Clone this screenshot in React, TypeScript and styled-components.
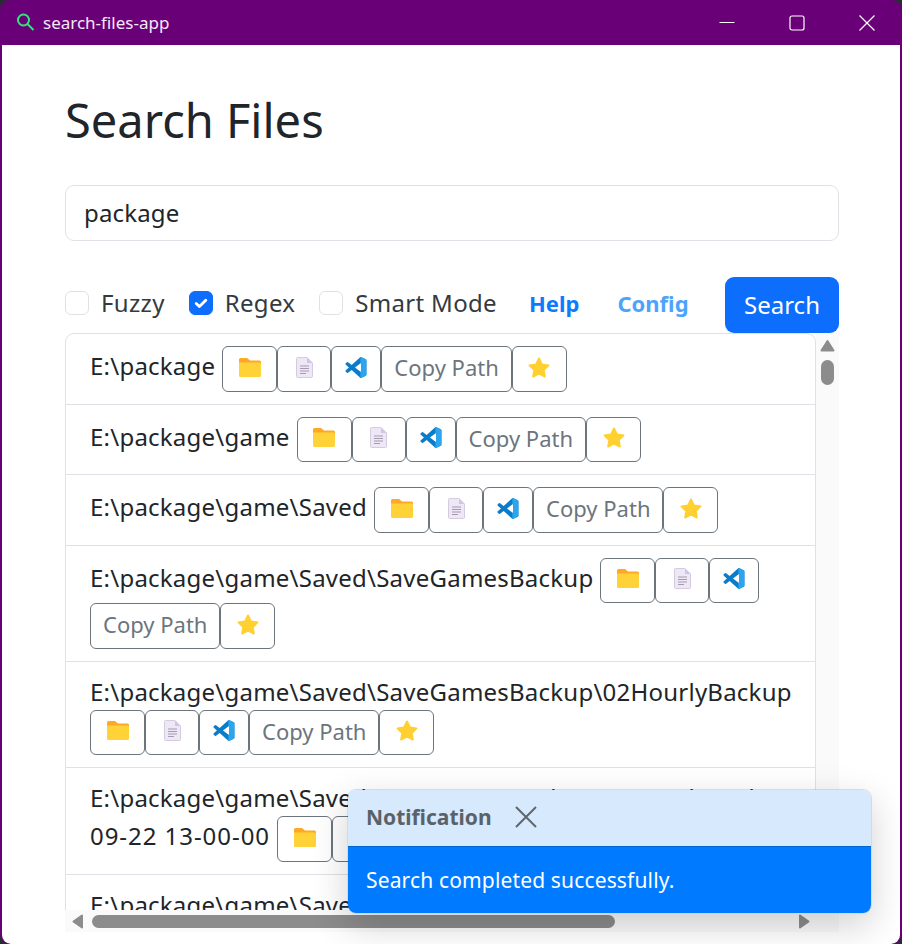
import styled, { createGlobalStyle } from "styled-components";

const GlobalStyle = createGlobalStyle`
    * { box-sizing: border-box; }
    html, body {
        margin: 0;
        height: 100%;
        background: #2b2b33;
    }
    body {
        font-family: "Noto Sans", "Liberation Sans", sans-serif;
        font-size: 24px;
        line-height: 36px;
        color: #212529;
    }
`;

const Window = styled.div`
    width: 902px;
    height: 944px;
    display: flex;
    flex-direction: column;
    background: #6a0078;
    border-radius: 10px;
    padding: 0 2px;
    overflow: hidden;
    position: relative;
`;

const TitleBar = styled.header`
    height: 45px;
    flex-shrink: 0;
    display: flex;
    align-items: center;
    margin-right: -2px;
    padding-left: 14px;
    color: #f5e9f7;
    font-size: 17px;
`;

const TitleText = styled.span`
    margin-left: 8px;
    flex-grow: 1;
`;

const CaptionButton = styled.button`
    width: 70px;
    height: 45px;
    border: 0;
    padding: 0;
    background: transparent;
    display: flex;
    align-items: center;
    justify-content: center;
`;

const Content = styled.main`
    flex-grow: 1;
    min-height: 0;
    background: #ffffff;
    border-radius: 0 0 9px 9px;
    padding: 47px 61px 12px 63px;
    display: flex;
    flex-direction: column;
`;

const Heading = styled.h1`
    margin: 0 0 37px;
    font-size: 47px;
    font-weight: 400;
    line-height: 56px;
`;

const SearchInput = styled.input`
    height: 56px;
    flex-shrink: 0;
    width: 100%;
    padding: 8px 18px 10px;
    font: inherit;
    letter-spacing: 0.15px;
    color: #212529;
    border: 1px solid #dee2e6;
    border-radius: 9px;
    outline: none;
`;

const Toolbar = styled.div`
    margin-top: 36px;
    height: 56px;
    flex-shrink: 0;
    display: flex;
    align-items: center;
`;

const Option = styled.label`
    display: flex;
    align-items: center;
    gap: 12px;
    margin-right: 24px;
    margin-bottom: 4px;
    color: #343a40;
    letter-spacing: 0.32px;
`;

const CheckBox = styled.span<{ $checked?: boolean }>`
    width: 24px;
    height: 24px;
    border-radius: 6px;
    border: 1px solid ${(p) => (p.$checked ? "#0d6efd" : "#dee2e6")};
    background: ${(p) => (p.$checked ? "#0d6efd" : "#ffffff")};
    display: flex;
    align-items: center;
    justify-content: center;
`;

const ToolLink = styled.a<{ $light?: boolean }>`
    font-size: 22px;
    font-weight: 700;
    margin-bottom: 4px;
    color: ${(p) => (p.$light ? "#4da3fb" : "#0d7bfd")};
    margin-left: ${(p) => (p.$light ? "38px" : "8px")};
`;

const SearchButton = styled.button`
    margin-left: auto;
    width: 114px;
    height: 56px;
    border: 0;
    border-radius: 9px;
    background: #0d6efd;
    color: #ffffff;
    font: inherit;
`;

const ResultsFrame = styled.section`
    flex-grow: 1;
    min-height: 0;
    display: grid;
    grid-template-columns: 751px 23px;
    grid-template-rows: minmax(0, 1fr) 22px;
    background: #fafafa;
`;

const ResultsViewport = styled.div`
    overflow: hidden;
    background: #ffffff;
    min-width: 0;
`;

const ResultList = styled.ul`
    list-style: none;
    margin: 0;
    padding: 0;
    border: 1px solid #dee2e6;
    border-radius: 9px;
`;

const ResultRow = styled.li`
    padding: 12px 24px;
    border-top: 1px solid #dee2e6;

    &:first-child {
        border-top: 0;
    }
`;

const PathText = styled.span`
    margin-right: 7px;
    letter-spacing: 0.23px;
`;

const PathStamp = styled.span`
    letter-spacing: 0.95px;
`;

const ActionButton = styled.button<{ $width?: number }>`
    display: inline-flex;
    align-items: center;
    justify-content: center;
    vertical-align: middle;
    height: 45.5px;
    width: ${(p) => (p.$width ? `${p.$width}px` : "auto")};
    padding: 0 12px 3px;
    background: #ffffff;
    border: 1px solid #6c757d;
    border-radius: 6px;
    color: #6c757d;
    font-family: inherit;
    font-size: 22px;
`;

const VerticalBar = styled.div`
    display: flex;
    flex-direction: column;
    align-items: center;
    gap: 6px;
    padding-top: 6px;
`;

const VerticalThumb = styled.div`
    width: 13px;
    height: 25px;
    border-radius: 7px;
    background: #8c8c8c;
`;

const HorizontalBar = styled.div`
    display: flex;
    align-items: center;
    gap: 6px;
    padding: 0 5px 0 6px;
`;

const HorizontalThumb = styled.div`
    width: 523px;
    height: 13px;
    border-radius: 7px;
    background: #8c8c8c;
    margin-right: auto;
`;

const Toast = styled.aside`
    position: absolute;
    left: 347px;
    top: 789px;
    width: 525px;
    border-radius: 9px;
    overflow: hidden;
    border: 1px solid rgba(0, 0, 0, 0.15);
    box-shadow: 0 12px 36px rgba(0, 0, 0, 0.18);
`;

const ToastHeader = styled.div`
    height: 57px;
    display: flex;
    align-items: center;
    gap: 22px;
    padding: 0 18px 3px;
    background: #d7e9fd;
    color: #5a6268;
    font-size: 21px;
    font-weight: 700;
    border-bottom: 1px solid #0066cc;
`;

const ToastBody = styled.div`
    height: 66px;
    display: flex;
    align-items: center;
    padding: 0 18px;
    background: #007bff;
    color: #ffffff;
    font-size: 21px;
    letter-spacing: 0.15px;
`;

const FolderIcon = () => (
    <svg width="22" height="19" viewBox="0 0 22 19">
        <path d="M1.5 0h6.5l3 2.5h9.5a1.5 1.5 0 0 1 1.5 1.5v2H0V1.5A1.5 1.5 0 0 1 1.5 0z" fill="#ffa726" />
        <path d="M0 4.5h20.5a1.5 1.5 0 0 1 1.5 1.5v11.5a1.5 1.5 0 0 1-1.5 1.5h-19A1.5 1.5 0 0 1 0 17.5z" fill="#ffd338" />
    </svg>
);

const DocIcon = () => (
    <svg width="17" height="21" viewBox="0 0 17 21">
        <path d="M1.5.5h9.5l5.5 5.5v13.5a1 1 0 0 1-1 1h-14a1 1 0 0 1-1-1v-18a1 1 0 0 1 1-1z" fill="#ede7f6" stroke="#d5cbe0" />
        <path d="M11 .5v5.5h5.5z" fill="#d1c4e9" />
        <path d="M4 9h9M4 11.5h9M4 14h9M4 16.5h6" stroke="#a79ab0" strokeWidth="1.1" />
    </svg>
);

const CodeIcon = () => {
    const logo =
        "M23.15 2.587L18.21.21a1.494 1.494 0 0 0-1.705.29l-9.46 8.63-4.12-3.128a.999.999 0 0 0-1.276.057L.327 7.261A1 1 0 0 0 .326 8.74L3.899 12 .326 15.26a1 1 0 0 0 .001 1.479L1.65 17.94a.999.999 0 0 0 1.276.057l4.12-3.128 9.46 8.63a1.492 1.492 0 0 0 1.704.29l4.942-2.377A1.5 1.5 0 0 0 24 20.06V3.939a1.5 1.5 0 0 0-.85-1.352zm-5.146 14.861L10.826 12l7.178-5.448v10.896z";
    return (
        <svg width="22" height="21" viewBox="0 0 24 24">
            <clipPath id="code-panel">
                <rect x="17" y="0" width="7" height="24" />
            </clipPath>
            <path d={logo} fill="#0a7cc9" />
            <path d={logo} fill="#2aa5ee" clipPath="url(#code-panel)" />
        </svg>
    );
};

const StarIcon = () => (
    <svg width="22" height="21" viewBox="0 0 22 21">
        <path
            d="M11 1.5l2.9 5.9 6.6 1-4.8 4.6 1.1 6.5L11 16.4l-5.8 3.1 1.1-6.5L1.5 8.4l6.6-1z"
            fill="#ffd02f"
            stroke="#ffd02f"
            strokeWidth="2"
            strokeLinejoin="round"
        />
    </svg>
);

const ScrollArrow = ({ d }: { d: string }) => (
    <svg width="15" height="15" viewBox="0 0 15 15" fill="#8c8c8c" stroke="#8c8c8c" strokeLinejoin="round" strokeWidth="2">
        <path d={d} />
    </svg>
);

const backupDir = "E:\\package\\game\\Saved\\SaveGamesBackup\\02HourlyBackup";

const rows = [
    { path: "E:\\package" },
    { path: "E:\\package\\game" },
    { path: "E:\\package\\game\\Saved" },
    { path: "E:\\package\\game\\Saved\\SaveGamesBackup" },
    { path: backupDir },
    { path: `${backupDir}\\2024-`, stamp: "09-22 13-00-00" },
    { path: `${backupDir}\\2024-09-22 13-00-00\\Saved` },
];

export default function App() {
    return (
        <>
            <GlobalStyle />
            <Window>
                <TitleBar>
                    <svg width="19" height="19" viewBox="0 0 19 19" fill="none" stroke="#2ee87a" strokeWidth="2">
                        <circle cx="7.5" cy="7" r="5.5" />
                        <path d="M11.5 11l6 6" />
                    </svg>
                    <TitleText>search-files-app</TitleText>
                    <CaptionButton aria-label="Minimize">
                        <svg width="16" height="16" viewBox="0 0 16 16" stroke="#ffffff">
                            <path d="M0.5 7.5h15" />
                        </svg>
                    </CaptionButton>
                    <CaptionButton aria-label="Maximize">
                        <svg width="16" height="16" viewBox="0 0 16 16" fill="none" stroke="#ffffff" strokeWidth="1.2">
                            <rect x="1" y="1" width="14" height="14" rx="2" />
                        </svg>
                    </CaptionButton>
                    <CaptionButton aria-label="Close">
                        <svg width="16" height="16" viewBox="0 0 16 16" stroke="#ffffff" strokeWidth="1.2">
                            <path d="M0.5 0.5l15 15M15.5 0.5l-15 15" />
                        </svg>
                    </CaptionButton>
                </TitleBar>
                <Content>
                    <Heading>Search Files</Heading>
                    <SearchInput defaultValue="package" />
                    <Toolbar>
                        <Option>
                            <CheckBox />
                            Fuzzy
                        </Option>
                        <Option>
                            <CheckBox $checked>
                                <svg width="16" height="16" viewBox="0 0 20 20" fill="none" stroke="#ffffff" strokeWidth="3.5" strokeLinecap="round" strokeLinejoin="round">
                                    <path d="M4 10.5l4 4 8-8" />
                                </svg>
                            </CheckBox>
                            Regex
                        </Option>
                        <Option>
                            <CheckBox />
                            Smart Mode
                        </Option>
                        <ToolLink>Help</ToolLink>
                        <ToolLink $light>Config</ToolLink>
                        <SearchButton>Search</SearchButton>
                    </Toolbar>
                    <ResultsFrame>
                        <ResultsViewport>
                            <ResultList>
                                {rows.map((row) => (
                                    <ResultRow key={row.path}>
                                        <PathText>
                                            {row.path}
                                            {row.stamp && <PathStamp>{row.stamp}</PathStamp>}
                                        </PathText>
                                        <ActionButton $width={55}><FolderIcon /></ActionButton>
                                        <ActionButton $width={54}><DocIcon /></ActionButton>
                                        <ActionButton $width={50}><CodeIcon /></ActionButton>
                                        <ActionButton>Copy Path</ActionButton>
                                        <ActionButton $width={55}><StarIcon /></ActionButton>
                                    </ResultRow>
                                ))}
                            </ResultList>
                        </ResultsViewport>
                        <VerticalBar>
                            <ScrollArrow d="M7.5 2L13.5 11.5H1.5z" />
                            <VerticalThumb />
                        </VerticalBar>
                        <HorizontalBar>
                            <ScrollArrow d="M2.5 7.5L11 1.5V13.5z" />
                            <HorizontalThumb />
                            <ScrollArrow d="M12.5 7.5L4 1.5V13.5z" />
                        </HorizontalBar>
                    </ResultsFrame>
                </Content>
                <Toast>
                    <ToastHeader>
                        Notification
                        <svg width="24" height="24" viewBox="0 0 24 24" stroke="#5f666d" strokeWidth="2">
                            <path d="M2 2l20 20M22 2L2 22" />
                        </svg>
                    </ToastHeader>
                    <ToastBody>Search completed successfully.</ToastBody>
                </Toast>
            </Window>
        </>
    );
}
